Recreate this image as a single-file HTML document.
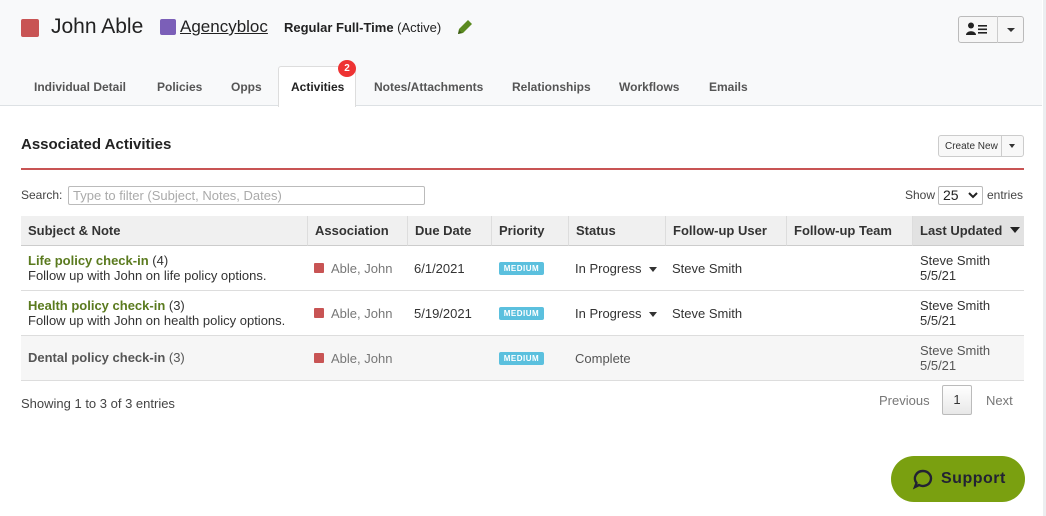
<!DOCTYPE html>
<html><head><style>
*{box-sizing:border-box;margin:0;padding:0}
body{width:1046px;height:516px;overflow:hidden;background:#fff;font-family:"Liberation Sans",sans-serif;color:#333;position:relative;font-size:13px}
.hdr{position:absolute;left:0;top:0;width:1042px;height:106px;background:#f8f9fa;border-bottom:1px solid #dde1e4}
.abs{position:absolute;white-space:nowrap}
.sq{position:absolute;width:18px;height:18px;border-radius:2px}
.tab{position:absolute;top:80px;font-size:12px;color:#555;font-weight:bold}
.th{position:absolute;top:216px;height:30px;line-height:29px;background:#f0f0f0;font-weight:bold;font-size:13px;color:#333;padding-left:7px;border-left:1px solid #ddd;border-bottom:1px solid #ccc}
.row{position:absolute;left:21px;width:1003px;border-bottom:1px solid #ddd}
.med{position:absolute;left:499px;width:45px;height:13px;background:#5bc0de;color:#fff;font-size:8px;font-weight:bold;text-align:center;line-height:13px;border-radius:2px;letter-spacing:.5px}
.assoc{position:absolute;left:314px;color:#777}
.assoc:before{content:"";display:inline-block;width:10px;height:10px;background:#c85454;border-radius:1px;margin-right:7px}
.caret{display:inline-block;width:0;height:0;border-left:4px solid transparent;border-right:4px solid transparent;border-top:5px solid #333;vertical-align:middle;margin-left:8px}
</style></head><body>
<div class="hdr"></div>
<div style="position:absolute;left:1043px;top:0;width:3px;height:516px;background:#eceef0"></div>
<div class="sq" style="left:21px;top:19px;background:#c85454"></div>
<div class="abs" style="left:51px;top:15px;font-size:21px;color:#222">John Able</div>
<div class="sq" style="left:160px;top:19px;width:16px;height:16px;background:#7b5fb8"></div>
<div class="abs" style="left:180px;top:17px;font-size:17px;color:#222;text-decoration:underline">Agencybloc</div>
<div class="abs" style="left:284px;top:20px;font-size:13px;color:#222"><b>Regular Full-Time</b> (Active)</div>
<svg class="abs" style="left:455px;top:17px" width="20" height="20" viewBox="0 0 20 20"><path d="M3 17l1-5L13 3l4 4-9 9z" fill="#5a8a1f"/><path d="M3 17l1-4 3 3z" fill="#3c5a15"/></svg>
<div class="abs" style="left:958px;top:16px;width:66px;height:27px;border:1px solid #bbb;border-radius:3px;background:#f6f6f6"></div>
<div class="abs" style="left:997px;top:16px;width:1px;height:27px;background:#ccc"></div>
<svg class="abs" style="left:966px;top:22px" width="26" height="14"><circle cx="5" cy="3.5" r="3" fill="#222"/><path d="M0 13c0-5 10-5 10 0z" fill="#222"/><rect x="12" y="3" width="9" height="1.6" fill="#222"/><rect x="12" y="6.5" width="9" height="1.6" fill="#222"/><rect x="12" y="10" width="9" height="1.6" fill="#222"/></svg>
<div class="abs" style="left:1007px;top:28px;border-left:4px solid transparent;border-right:4px solid transparent;border-top:4px solid #333"></div>
<div class="tab" style="left:34px">Individual Detail</div>
<div class="tab" style="left:157px">Policies</div>
<div class="tab" style="left:231px">Opps</div>
<div class="abs" style="left:278px;top:66px;width:78px;height:41px;background:#fff;border:1px solid #ddd;border-bottom:none;border-radius:3px 3px 0 0"></div>
<div class="tab" style="left:291px;color:#222">Activities</div>
<div class="abs" style="left:338px;top:60px;width:18px;height:17px;border-radius:50%;background:#e33;color:#fff;font-size:10px;font-weight:bold;text-align:center;line-height:17px">2</div>
<div class="tab" style="left:374px">Notes/Attachments</div>
<div class="tab" style="left:512px">Relationships</div>
<div class="tab" style="left:619px">Workflows</div>
<div class="tab" style="left:709px">Emails</div>

<div class="abs" style="left:21px;top:136px;font-size:15px;font-weight:bold;color:#222">Associated Activities</div>
<div class="abs" style="left:938px;top:135px;width:86px;height:22px;border:1px solid #ccc;border-radius:3px;background:#f8f8f8;font-size:10px;color:#333;padding:5px 0 0 6px">Create New</div>
<div class="abs" style="left:1001px;top:135px;width:1px;height:22px;background:#ccc"></div>
<div class="abs" style="left:1009px;top:144px;border-left:3.5px solid transparent;border-right:3.5px solid transparent;border-top:4px solid #333"></div>
<div class="abs" style="left:21px;top:168px;width:1003px;height:2px;background:#c85454"></div>
<div class="abs" style="left:21px;top:188px;font-size:12px;color:#444">Search:</div>
<div class="abs" style="left:68px;top:186px;width:357px;height:19px;border:1px solid #bbb;border-radius:2px;font-size:13px;color:#aaa;padding:1px 0 0 4px">Type to filter (Subject, Notes, Dates)</div>
<div class="abs" style="left:905px;top:188px;font-size:12px;color:#444">Show</div>
<div class="abs" style="left:938px;top:186px;width:45px;height:19px;border:1px solid #bbb;border-radius:2px;font-size:14px;color:#222;padding:0 0 0 4px">25</div>
<svg class="abs" style="left:968px;top:192px" width="10" height="8"><path d="M1 1l4 4 4-4" stroke="#222" stroke-width="2" fill="none"/></svg>
<div class="abs" style="left:987px;top:188px;font-size:12px;color:#444">entries</div>

<div class="th" style="left:21px;width:286px;border-left:none">Subject &amp; Note</div>
<div class="th" style="left:307px;width:100px">Association</div>
<div class="th" style="left:407px;width:84px">Due Date</div>
<div class="th" style="left:491px;width:77px">Priority</div>
<div class="th" style="left:568px;width:97px">Status</div>
<div class="th" style="left:665px;width:121px">Follow-up User</div>
<div class="th" style="left:786px;width:126px">Follow-up Team</div>
<div class="th" style="left:912px;width:112px;background:#e2e2e2">Last Updated</div>
<div class="abs" style="left:1010px;top:227px;border-left:5px solid transparent;border-right:5px solid transparent;border-top:6px solid #222"></div>

<div class="row" style="top:246px;height:45px"></div>
<div class="row" style="top:291px;height:45px"></div>
<div class="row" style="top:336px;height:45px;background:#f6f6f6"></div>

<div class="abs" style="left:28px;top:253px;line-height:15px"><b style="color:#5a7a1e">Life policy check-in</b> (4)<br>Follow up with John on life policy options.</div>
<div class="abs" style="left:28px;top:298px;line-height:15px"><b style="color:#5a7a1e">Health policy check-in</b> (3)<br>Follow up with John on health policy options.</div>
<div class="abs" style="left:28px;top:350px;color:#555"><b>Dental policy check-in</b> (3)</div>

<div class="abs assoc" style="top:261px">Able, John</div>
<div class="abs assoc" style="top:306px">Able, John</div>
<div class="abs assoc" style="top:351px">Able, John</div>
<div class="abs" style="left:414px;top:261px">6/1/2021</div>
<div class="abs" style="left:414px;top:306px">5/19/2021</div>
<div class="med" style="top:262px">MEDIUM</div>
<div class="med" style="top:307px">MEDIUM</div>
<div class="med" style="top:352px">MEDIUM</div>
<div class="abs" style="left:575px;top:261px">In Progress<span class="caret"></span></div>
<div class="abs" style="left:575px;top:306px">In Progress<span class="caret"></span></div>
<div class="abs" style="left:575px;top:351px;color:#555">Complete</div>
<div class="abs" style="left:672px;top:261px">Steve Smith</div>
<div class="abs" style="left:672px;top:306px">Steve Smith</div>
<div class="abs" style="left:920px;top:253px;line-height:15px">Steve Smith<br>5/5/21</div>
<div class="abs" style="left:920px;top:298px;line-height:15px">Steve Smith<br>5/5/21</div>
<div class="abs" style="left:920px;top:343px;line-height:15px;color:#555">Steve Smith<br>5/5/21</div>

<div class="abs" style="left:21px;top:396px;color:#444">Showing 1 to 3 of 3 entries</div>
<div class="abs" style="left:879px;top:393px;color:#777">Previous</div>
<div class="abs" style="left:942px;top:385px;width:30px;height:30px;border:1px solid #bbb;border-radius:2px;background:linear-gradient(#fff,#e8e8e8);text-align:center;line-height:28px;color:#333">1</div>
<div class="abs" style="left:986px;top:393px;color:#777">Next</div>

<div class="abs" style="left:891px;top:456px;width:134px;height:46px;border-radius:23px;background:#7aa010"></div>
<svg class="abs" style="left:912px;top:468px" width="22" height="22" viewBox="0 0 22 22"><path d="M11 3a8 7.5 0 1 1-4 14l-4 2 1.5-4A8 7.5 0 0 1 11 3z" fill="none" stroke="#223" stroke-width="2.4"/></svg>
<div class="abs" style="left:941px;top:470px;font-size:16px;font-weight:bold;color:#223;letter-spacing:.5px">Support</div>
</body></html>
